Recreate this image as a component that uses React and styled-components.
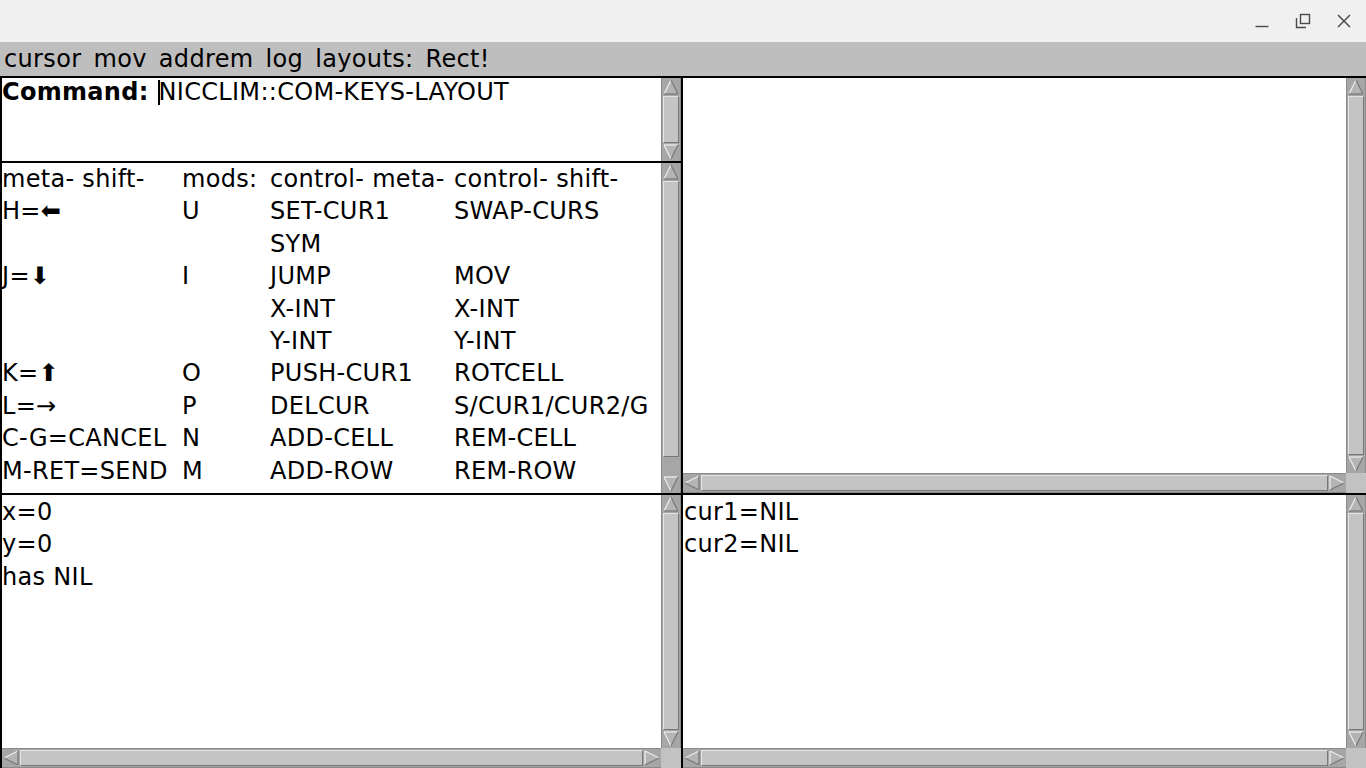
import React from 'react';
import styled, { createGlobalStyle } from 'styled-components';

const GlobalStyle = createGlobalStyle`
  html, body {
    margin: 0;
    padding: 0;
    background: #ffffff;
    overflow: hidden;
  }
  body {
    font-family: "DejaVu Sans", "Liberation Sans", sans-serif;
  }
`;

const Window = styled.div`
  width: 1366px;
  height: 768px;
  display: flex;
  flex-direction: column;
  font-family: "DejaVu Sans", "Liberation Sans", sans-serif;
  color: #000;
`;

const TitleBar = styled.div`
  height: 42px;
  flex-shrink: 0;
  background: #f0f0f0;
  display: flex;
  justify-content: flex-end;
  align-items: center;
  padding-right: 6px;
  gap: 9px;
`;

const WinButton = styled.button`
  width: 32px;
  height: 32px;
  border: none;
  background: transparent;
  padding: 0;
  display: flex;
  align-items: center;
  justify-content: center;
  color: #4a4a4a;
`;

const MenuBar = styled.div`
  height: 34px;
  flex-shrink: 0;
  background: #bebebe;
  display: flex;
  align-items: center;
  gap: 12px;
  padding-left: 4px;
  font-size: 24px;
  letter-spacing: 0.35px;
`;

const MenuItem = styled.span`
  line-height: 34px;
`;

const Workspace = styled.div`
  flex: 1;
  min-height: 0;
  display: grid;
  grid-template-columns: 679px 1fr;
  grid-template-rows: 415px 1fr;
  gap: 2px;
  background: #000;
  border-top: 2px solid #000;
  padding-left: 2px;
`;

const Stack = styled.div`
  display: flex;
  flex-direction: column;
  gap: 2px;
  min-height: 0;
`;

const Pane = styled.div`
  display: grid;
  grid-template-columns: 1fr 20px;
  grid-template-rows: ${p => (p.$hscroll ? '1fr 20px' : '1fr')};
  background: #fff;
  min-height: 0;
  height: ${p => (p.$height ? `${p.$height}px` : 'auto')};
  flex: ${p => (p.$height ? 'none' : '1')};
  overflow: hidden;
`;

const Content = styled.div`
  font-size: 24px;
  letter-spacing: 0.3px;
  line-height: ${p => p.$lh || 32.4}px;
  padding-left: ${p => p.$pl || 0}px;
  margin-top: ${p => p.$mt || 0}px;
  overflow: hidden;
  white-space: nowrap;
`;

const Line = styled.div`
  height: ${p => p.$lh || 32.4}px;
`;

const Bold = styled.span`
  font-weight: bold;
`;

const Caret = styled.span`
  display: inline-block;
  width: 0;
  height: 25px;
  border-left: 2px solid #000;
  margin: 0 -1px 0 9px;
  vertical-align: -5px;
`;

const KeyGrid = styled.div`
  display: grid;
  grid-template-columns: 180px 88px 184px 1fr;
  grid-auto-rows: 32.4px;
  align-items: center;
`;

const VTrack = styled.div`
  grid-column: 2;
  grid-row: 1;
  background: #a6a6a6;
  border-left: 1px solid #8a8a8a;
  border-right: 1px solid #8a8a8a;
  display: flex;
  flex-direction: column;
  min-height: 0;
`;

const HTrack = styled.div`
  grid-column: 1;
  grid-row: 2;
  background: #a6a6a6;
  border-top: 1px solid #8a8a8a;
  border-bottom: 1px solid #8a8a8a;
  display: flex;
  flex-direction: row;
  min-width: 0;
`;

const Corner = styled.div`
  grid-column: 2;
  grid-row: 2;
  background: #c2c2c2;
`;

const Gap = styled.div`
  flex: ${p => p.$grow};
  min-height: 0;
  min-width: 0;
`;

const Thumb = styled.div`
  flex: ${p => p.$grow};
  min-height: 0;
  min-width: 0;
  background: #c4c4c4;
  border-top: 1px solid #e4e4e4;
  border-left: 1px solid #e4e4e4;
  border-right: 1px solid #787878;
  border-bottom: 1px solid #787878;
  margin: ${p => (p.$horizontal ? '1px 0' : '0 1px')};
`;

const ArrowBox = styled.div`
  flex: none;
  width: 18px;
  height: 18px;
  display: flex;
  align-items: center;
  justify-content: center;
`;

const arrowShapes = {
  up: { pts: '9,2 2,16 16,16', light: [[2, 16, 9, 2]], dark: [[9, 2, 16, 16], [2, 16, 16, 16]] },
  down: { pts: '2,2 16,2 9,16', light: [[2, 2, 16, 2], [2, 2, 9, 16]], dark: [[16, 2, 9, 16]] },
  left: { pts: '2,9 16,2 16,16', light: [[2, 9, 16, 2]], dark: [[2, 9, 16, 16], [16, 2, 16, 16]] },
  right: { pts: '16,9 2,2 2,16', light: [[2, 2, 16, 9], [2, 2, 2, 16]], dark: [[2, 16, 16, 9]] },
};

const Arrow = ({ dir }) => {
  const s = arrowShapes[dir];
  return (
    <ArrowBox>
      <svg width="18" height="18" viewBox="0 0 18 18">
        <polygon points={s.pts} fill="#b4b4b4" />
        {s.light.map((l, i) => (
          <line key={'l' + i} x1={l[0]} y1={l[1]} x2={l[2]} y2={l[3]} stroke="#ececec" strokeWidth="1.3" />
        ))}
        {s.dark.map((l, i) => (
          <line key={'d' + i} x1={l[0]} y1={l[1]} x2={l[2]} y2={l[3]} stroke="#7a7a7a" strokeWidth="1.3" />
        ))}
      </svg>
    </ArrowBox>
  );
};

// thumb given as [start, end] fractions of the trough
const VScroll = ({ thumb = [0, 1] }) => (
  <VTrack>
    <Arrow dir="up" />
    <Gap $grow={thumb[0]} />
    <Thumb $grow={thumb[1] - thumb[0]} />
    <Gap $grow={1 - thumb[1]} />
    <Arrow dir="down" />
  </VTrack>
);

const HScroll = ({ thumb = [0, 1] }) => (
  <HTrack>
    <Arrow dir="left" />
    <Gap $grow={thumb[0]} />
    <Thumb $horizontal $grow={thumb[1] - thumb[0]} />
    <Gap $grow={1 - thumb[1]} />
    <Arrow dir="right" />
  </HTrack>
);

const keyRows = [
  ['meta- shift-', 'mods:', 'control- meta-', 'control- shift-'],
  ['H=\u2B05', 'U', 'SET-CUR1', 'SWAP-CURS'],
  ['', '', 'SYM', ''],
  ['J=\u2B07', 'I', 'JUMP', 'MOV'],
  ['', '', 'X-INT', 'X-INT'],
  ['', '', 'Y-INT', 'Y-INT'],
  ['K=\u2B06', 'O', 'PUSH-CUR1', 'ROTCELL'],
  ['L=\u2192', 'P', 'DELCUR', 'S/CUR1/CUR2/G'],
  ['C-G=CANCEL', 'N', 'ADD-CELL', 'REM-CELL'],
  ['M-RET=SEND', 'M', 'ADD-ROW', 'REM-ROW'],
];

export default function App() {
  return (
    <Window>
      <GlobalStyle />
      <TitleBar>
        <WinButton aria-label="minimize">
          <svg width="16" height="16" viewBox="0 0 16 16">
            <line x1="1.5" y1="13.5" x2="14.5" y2="13.5" stroke="currentColor" strokeWidth="1.4" />
          </svg>
        </WinButton>
        <WinButton aria-label="restore">
          <svg width="16" height="16" viewBox="0 0 16 16">
            <rect x="5.5" y="1.5" width="9" height="9" fill="none" stroke="currentColor" strokeWidth="1.4" />
            <polyline points="1.5,5 1.5,14.5 11,14.5" fill="none" stroke="currentColor" strokeWidth="1.4" />
          </svg>
        </WinButton>
        <WinButton aria-label="close">
          <svg width="16" height="16" viewBox="0 0 16 16">
            <line x1="2" y1="2" x2="14" y2="14" stroke="currentColor" strokeWidth="1.5" />
            <line x1="14" y1="2" x2="2" y2="14" stroke="currentColor" strokeWidth="1.5" />
          </svg>
        </WinButton>
      </TitleBar>

      <MenuBar>
        <MenuItem>cursor</MenuItem>
        <MenuItem>mov</MenuItem>
        <MenuItem>addrem</MenuItem>
        <MenuItem>log</MenuItem>
        <MenuItem>layouts:</MenuItem>
        <MenuItem>Rect!</MenuItem>
      </MenuBar>

      <Workspace>
        <Stack>
          <Pane $height={83}>
            <Content $lh={28}>
              <Line $lh={28}>
                <Bold>Command:</Bold>
                <Caret />
                NICCLIM::COM-KEYS-LAYOUT
              </Line>
            </Content>
            <VScroll thumb={[0, 1]} />
          </Pane>
          <Pane>
            <Content>
              <KeyGrid>
                {keyRows.map((row, r) =>
                  row.map((cell, c) => <span key={r + '-' + c}>{cell}</span>)
                )}
              </KeyGrid>
            </Content>
            <VScroll thumb={[0, 0.94]} />
          </Pane>
        </Stack>

        <Pane $hscroll>
          <Content />
          <VScroll thumb={[0, 1]} />
          <HScroll thumb={[0, 1]} />
          <Corner />
        </Pane>

        <Pane $hscroll>
          <Content $mt={1}>
            <Line>x=0</Line>
            <Line>y=0</Line>
            <Line>has NIL</Line>
          </Content>
          <VScroll thumb={[0, 1]} />
          <HScroll thumb={[0, 1]} />
          <Corner />
        </Pane>

        <Pane $hscroll>
          <Content $pl={1} $mt={1}>
            <Line>cur1=NIL</Line>
            <Line>cur2=NIL</Line>
          </Content>
          <VScroll thumb={[0, 1]} />
          <HScroll thumb={[0, 1]} />
          <Corner />
        </Pane>
      </Workspace>
    </Window>
  );
}
